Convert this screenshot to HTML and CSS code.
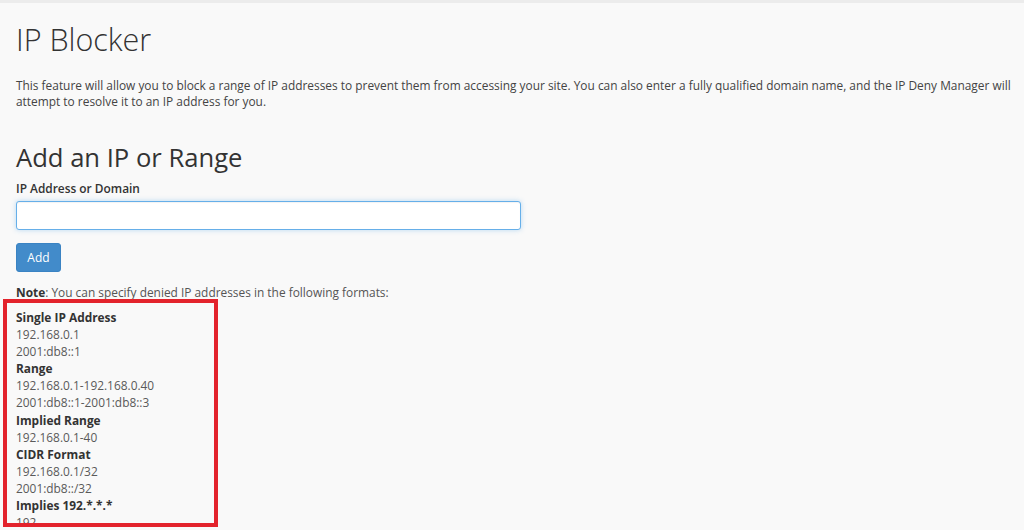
FILE: index.html
```html
<!DOCTYPE html>
<html lang="en">
<head>
<meta charset="utf-8">
<title>IP Blocker</title>
<link rel="stylesheet" href="styles.css">
</head>
<body>
<div class="topbar"></div>
<main class="page">
  <h1 class="title">IP Blocker</h1>
  <p class="intro">This feature will allow you to block a range of IP addresses to prevent them from accessing your site. You can also enter a fully qualified domain name, and the IP Deny Manager will attempt to resolve it to an IP address for you.</p>
  <h2 class="subtitle">Add an IP or Range</h2>
  <form class="form">
    <label class="label" for="ip">IP Address or Domain</label>
    <input class="input" id="ip" type="text">
    <button class="btn" type="button">Add</button>
  </form>
  <p class="note"><strong>Note</strong>: You can specify denied IP addresses in the following formats:</p>
  <dl class="formats">
    <dt>Single IP Address</dt>
    <dd>192.168.0.1</dd>
    <dd>2001:db8::1</dd>
    <dt>Range</dt>
    <dd>192.168.0.1-192.168.0.40</dd>
    <dd>2001:db8::1-2001:db8::3</dd>
    <dt>Implied Range</dt>
    <dd>192.168.0.1-40</dd>
    <dt>CIDR Format</dt>
    <dd>192.168.0.1/32</dd>
    <dd>2001:db8::/32</dd>
    <dt>Implies 192.*.*.*</dt>
    <dd>192.</dd>
  </dl>
</main>
<div class="highlight"></div>
</body>
</html>
```

FILE: styles.css
```css
html, body {
  margin: 0;
  padding: 0;
  background: #f9f9f9;
  height: 530px;
  overflow: hidden;
}
body {
  font-family: "Open Sans", "Liberation Sans", sans-serif;
  font-size: 11.9px;
  color: #555;
  position: relative;
}
.topbar {
  height: 3px;
  background: #ececec;
}
.page {
  padding: 0 4px 0 16px;
}
.title {
  margin: 0;
  padding-top: 16px;
  font-size: 30.5px;
  font-weight: 300;
  line-height: 40px;
  color: #333;
}
.intro {
  margin: 18px 0 0;
  line-height: 16px;
  color: #444;
}
.subtitle {
  margin: 33px 0 0;
  font-size: 25.6px;
  font-weight: 400;
  line-height: 32px;
  color: #333;
}
.form {
  display: flex;
  flex-direction: column;
  align-items: flex-start;
}
.label {
  font-weight: 600;
  color: #333;
  line-height: 17px;
  margin-top: 6px;
}
.input {
  box-sizing: border-box;
  width: 505px;
  height: 29px;
  margin-top: 4px;
  border: 1px solid #66afe9;
  border-radius: 3px;
  background: #fff;
  box-shadow: inset 0 1px 1px rgba(0,0,0,.05), 0 0 5px rgba(102,175,233,.45);
  outline: none;
}
.btn {
  box-sizing: border-box;
  width: 45px;
  height: 29px;
  margin-top: 13px;
  border: 1px solid #3a83c3;
  border-radius: 3px;
  background: #428bca;
  color: #fff;
  font-family: inherit;
  font-size: 12px;
  padding: 0;
}
.note {
  margin: 12px 0 0;
  line-height: 17px;
  color: #555;
}
.note strong {
  color: #333;
  font-weight: 700;
}
.formats {
  margin: 8px 0 0;
  line-height: 17.1px;
}
.formats dt {
  font-weight: 700;
  color: #333;
}
.formats dd {
  margin: 0;
  color: #5a5a5a;
}
.highlight {
  position: absolute;
  left: 3px;
  top: 299px;
  width: 207px;
  height: 220px;
  border: 4px solid #e3232c;
}
```
